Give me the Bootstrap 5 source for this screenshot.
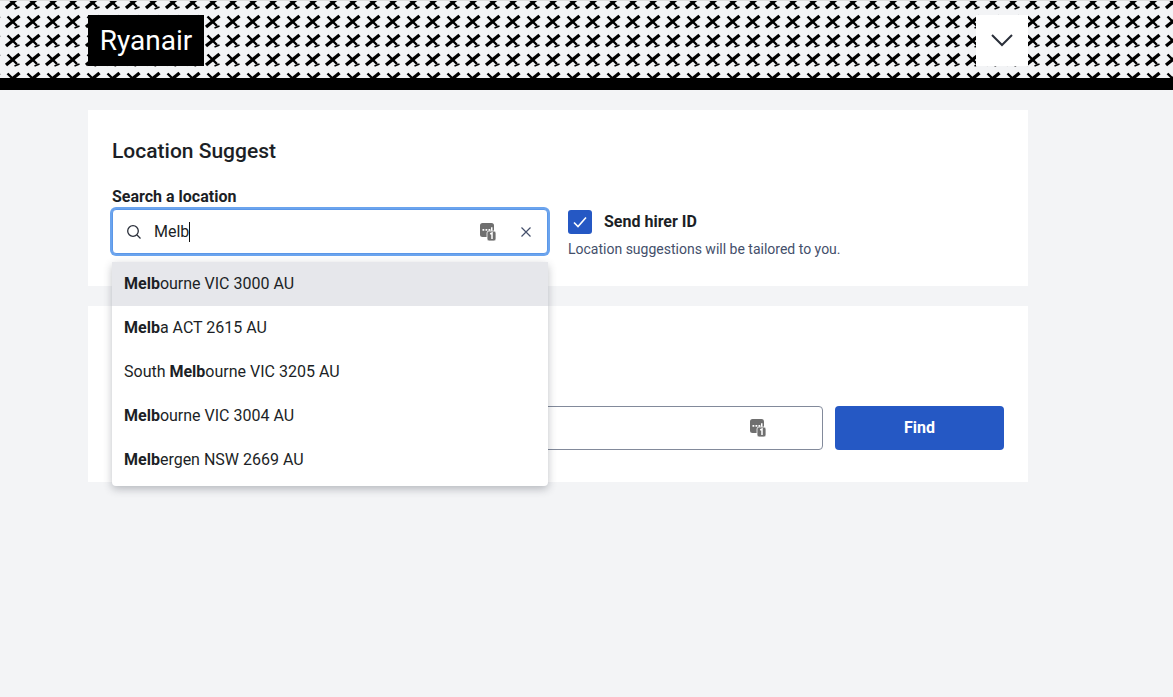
<!DOCTYPE html>
<html lang="en">
<head>
<meta charset="utf-8">
<title>Location Suggest</title>
<link href="https://cdn.jsdelivr.net/npm/bootstrap@5.3.0/dist/css/bootstrap.min.css" rel="stylesheet">
<style>
html,body{height:100%}
body{background:#f3f4f6;font-family:Roboto,"Liberation Sans",sans-serif;color:#1c1f26;font-size:16px;overflow:hidden}
.brand-head{height:90px;border-bottom:12px solid #000;background-color:#f3f4f6;background-image:url("data:image/svg+xml,%3Csvg xmlns='http://www.w3.org/2000/svg' width='20' height='19'%3E%3Cg fill='none' stroke='%23000' transform='translate(0 -.5)'%3E%3Cpath stroke-width='3.400' d='M3 15.500 16.500 4.500'/%3E%3Cpath stroke-width='2.400' d='M4.500 5 14 14.500'/%3E%3Cpath stroke-width='1.800' d='M11.500 16.500 16.500 14.500'/%3E%3C/g%3E%3C/svg%3E");background-position:3px 12px;box-shadow:inset 0 1px #dcdcdc;padding-top:15px}
.wrap-main{width:940px;margin-left:88px}
.logo-box{background:#000;color:#fff;font-size:28px;line-height:51px;height:51px;width:116px;text-align:center}
.menu-btn{width:52px;height:51px;background:#fff;border:0;padding:0}
.panel{background:#fff;padding:24px;height:176px;margin-top:20px}
.panel-title{font-size:21px;font-weight:500;line-height:32px;margin:0 0 21px;padding-top:1px}
.field-label{font-weight:700;line-height:18px;margin-bottom:3px}
.search-box{width:436px;height:45px;border:1px solid #5b97e8;box-shadow:0 0 0 2px #6ba4ee;border-radius:4px;background:#fff;padding:0 13px}
.search-wrap{width:436px}
.typed{margin-left:12px;border-right:1px solid #111;line-height:20px;flex:0 0 auto}
.hirer-col{margin-left:20px;padding-top:22px}
.hirer-check{width:24px;height:24px;background:#2558c4;border-radius:3px;flex:none}
.hirer-label{font-weight:700;line-height:24px}
.hirer-note{font-size:14px;color:#444f6b;line-height:18px;margin-top:6px}
.suggest-menu{position:absolute;left:0;top:74px;width:100%;background:#fff;border-radius:4px;box-shadow:0 3px 8px rgba(40,45,60,.3);z-index:5;margin:0;padding:0 0 4px;list-style:none}
.suggest-menu li{height:44px;line-height:43px;padding-left:12px}
.suggest-menu li.on{background:#e6e7eb}
.suggest-menu b{font-weight:700}
.second-row{padding-top:76px}
.plain-input{width:711px;height:44px;border:1px solid #828a9b;border-radius:4px;background:#fff;padding-right:56px}
.find-btn{width:169px;height:44px;background:#2558c4;border:0;border-radius:4px;color:#fff;font-weight:700;font-size:16px;margin-left:12px}
.clear-icon{margin-left:24px;margin-right:2px}
</style>
</head>
<body>
<header class="brand-head">
  <div class="wrap-main d-flex justify-content-between">
    <div class="logo-box">Ryanair</div>
    <button class="menu-btn d-flex align-items-center justify-content-center" aria-label="Menu">
      <svg width="24" height="14" viewBox="0 0 24 14" fill="none" stroke="#2a2f3a" stroke-width="2"><path d="M2 1l10 10L22 1"/></svg>
    </button>
  </div>
</header>
<main class="wrap-main">
  <section class="panel">
    <h2 class="panel-title">Location Suggest</h2>
    <div class="d-flex">
      <div class="search-wrap position-relative">
        <div class="field-label">Search a location</div>
        <div class="search-box d-flex align-items-center">
          <svg width="16" height="16" viewBox="0 0 16 16" fill="none" stroke="#2a2f3a" stroke-width="1.300"><circle cx="7" cy="7" r="5.300"/><path d="M11 11l3.500 3.500"/></svg>
          <span class="typed">Melb</span>
          <svg class="ms-auto" width="16" height="18" viewBox="0 0 16 18"><rect x="0" y="0" width="14" height="14" rx="2.500" fill="#6f6f6f"/><rect x="7" y="8" width="9" height="10" rx="2" fill="#6f6f6f" stroke="#fff" stroke-width=".8"/><path d="M2.500 6h1.800v1.800H2.500zM5.500 6h1.800v1.800H5.500zM8.500 6h1.800v1.800H8.500zM11 4.200h1.500V7.800H11z" fill="#fff"/><path d="M10.200 11l1.800-1v6" stroke="#fff" stroke-width="1.500" fill="none"/></svg>
          <svg class="clear-icon" width="12" height="12" viewBox="0 0 12 12" fill="none" stroke="#444f6b" stroke-width="1.200"><path d="M1.500 1.500l9 9M10.500 1.500l-9 9"/></svg>
        </div>
        <ul class="suggest-menu">
          <li class="on"><b>Melb</b>ourne VIC 3000 AU</li>
          <li><b>Melb</b>a ACT 2615 AU</li>
          <li>South <b>Melb</b>ourne VIC 3205 AU</li>
          <li><b>Melb</b>ourne VIC 3004 AU</li>
          <li><b>Melb</b>ergen NSW 2669 AU</li>
        </ul>
      </div>
      <div class="hirer-col">
        <div class="d-flex align-items-center gap-2">
          <span class="hirer-check d-flex align-items-center justify-content-center me-1">
            <svg width="14" height="12" viewBox="0 0 14 12" fill="none" stroke="#fff" stroke-width="1.600"><path d="M1 6.500l4 4L13 1.500"/></svg>
          </span>
          <span class="hirer-label">Send hirer ID</span>
        </div>
        <div class="hirer-note">Location suggestions will be tailored to you.</div>
      </div>
    </div>
  </section>
  <section class="panel">
    <div class="second-row d-flex">
      <div class="plain-input d-flex align-items-center justify-content-end">
        <svg width="16" height="18" viewBox="0 0 16 18"><rect x="0" y="0" width="14" height="14" rx="2.500" fill="#6f6f6f"/><rect x="7" y="8" width="9" height="10" rx="2" fill="#6f6f6f" stroke="#fff" stroke-width=".8"/><path d="M2.500 6h1.800v1.800H2.500zM5.500 6h1.800v1.800H5.500zM8.500 6h1.800v1.800H8.500zM11 4.200h1.500V7.800H11z" fill="#fff"/><path d="M10.200 11l1.800-1v6" stroke="#fff" stroke-width="1.500" fill="none"/></svg>
      </div>
      <button class="find-btn">Find</button>
    </div>
  </section>
</main>
<script src="https://cdn.jsdelivr.net/npm/bootstrap@5.3.0/dist/js/bootstrap.bundle.min.js"></script>
</body>
</html>
